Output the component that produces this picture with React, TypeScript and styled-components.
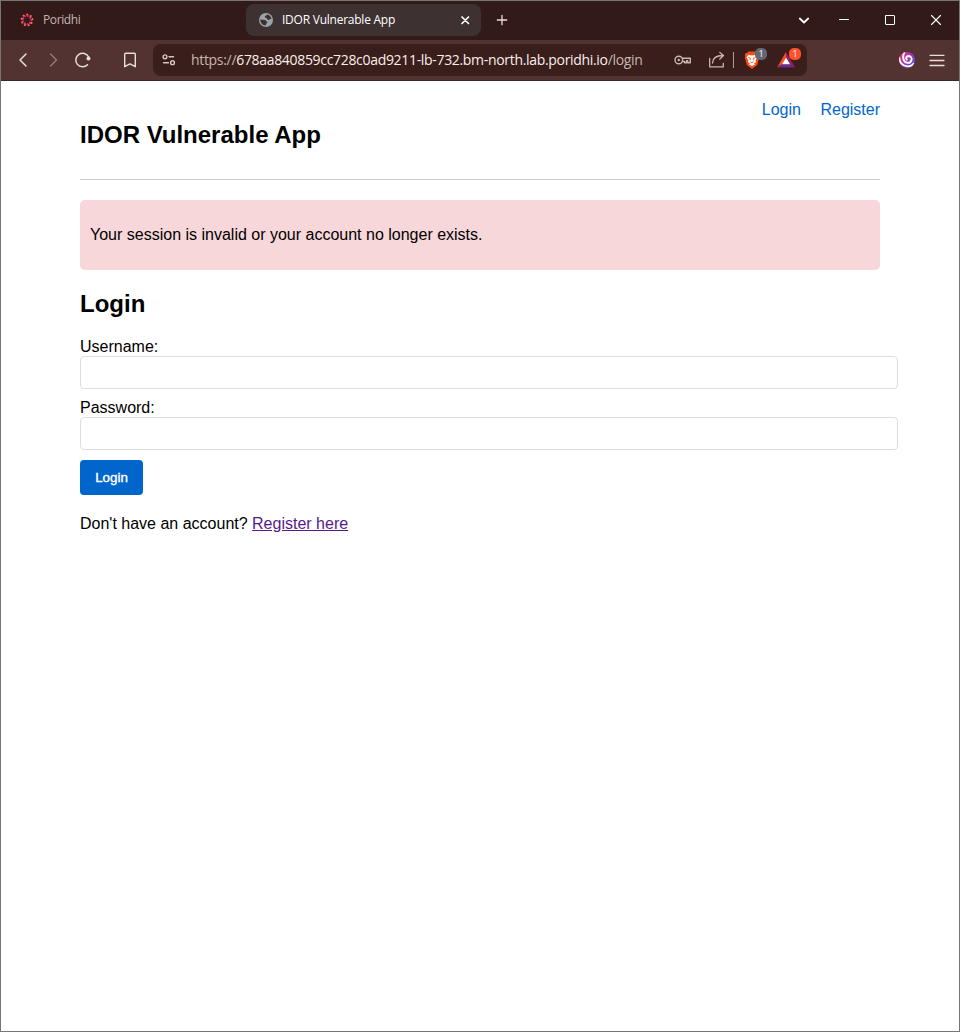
import React from "react";
import styled, { createGlobalStyle } from "styled-components";

const GlobalStyle = createGlobalStyle`
  * { box-sizing: border-box; }
  body { margin: 0; background: #fff; }
`;

const Window = styled.div`
  display: flex;
  flex-direction: column;
  width: 960px;
  height: 1032px;
  border: 1px solid #767676;
  background: #fff;
  overflow: hidden;
`;

const TabStrip = styled.div`
  display: flex;
  align-items: center;
  flex: none;
  height: 39px;
  padding: 0 0 1px 6px;
  gap: 4px;
  background: #311a17;
`;

const Tab = styled.div<{ $active?: boolean }>`
  display: flex;
  align-items: center;
  width: 235px;
  height: 32px;
  padding: 0 8px 0 12px;
  border-radius: 8px;
  background: ${(p) => (p.$active ? "#3e3131" : "transparent")};
  color: ${(p) => (p.$active ? "#fff" : "#c2b6b4")};
`;

const TabTitle = styled.span<{ $spacing: number }>`
  flex: 1;
  margin-left: 8px;
  font: 12px/16px "Open Sans", "Noto Sans", sans-serif;
  letter-spacing: ${(p) => p.$spacing}px;
  white-space: nowrap;
`;

const Cell = styled.span<{ $w: number; $color?: string }>`
  display: flex;
  flex: none;
  align-items: center;
  justify-content: center;
  width: ${(p) => p.$w}px;
  height: 32px;
  color: ${(p) => p.$color ?? "#e9dedb"};
`;

const BookmarkCell = styled(Cell)`
  margin-left: 17px;
`;

const WindowControls = styled.div`
  display: flex;
  margin-left: auto;
`;

const Toolbar = styled.div`
  display: flex;
  align-items: center;
  flex: none;
  height: 41px;
  padding: 0 7px;
  background: #523331;
  border-bottom: 1px solid #3b2728;
`;

const AddressBar = styled.div`
  display: flex;
  align-items: center;
  width: 654px;
  height: 32px;
  margin-left: 8px;
  padding-right: 4px;
  border-radius: 8px;
  background: #391e1b;
`;

const Url = styled.span`
  flex: 1;
  margin-left: 6px;
  font: 14px/20px "Open Sans", "Noto Sans", sans-serif;
  letter-spacing: -0.32px;
  white-space: nowrap;
  color: #c9b6b2;
`;

const Host = styled.span`
  color: #fbeeeb;
`;

const Divider = styled.span`
  width: 1px;
  height: 16px;
  background: #ae9d9a;
`;

const Extension = styled(Cell)`
  position: relative;
`;

const Badge = styled.span<{ $bg: string }>`
  position: absolute;
  top: 4px;
  right: 2px;
  width: 12px;
  height: 12px;
  border-radius: 5px;
  background: ${(p) => p.$bg};
  color: #fff;
  font: 9px/12px "Open Sans", sans-serif;
  text-align: center;
`;

const ToolbarEnd = styled.div`
  display: flex;
  margin-left: auto;
`;

const Page = styled.main`
  width: 800px;
  margin: 0 auto;
  font: 16px/18px "Liberation Sans", Arial, sans-serif;
  color: #000;
`;

const Header = styled.header`
  display: flex;
  justify-content: space-between;
  align-items: flex-start;
  height: 99px;
  padding-top: 20px;
  border-bottom: 1px solid #ccc;
`;

const Heading = styled.h2`
  margin: 20px 0;
  font-size: 24px;
  line-height: 28px;
`;

const Nav = styled.nav`
  display: flex;
  gap: 19.500px;
`;

const NavLink = styled.a`
  color: #0066cc;
  text-decoration: none;
`;

const Alert = styled.div`
  margin: 20px 0;
  padding: 26px 10px;
  border-radius: 5px;
  background: #f8d7da;
`;

const Field = styled.label`
  display: block;
  margin-bottom: 10px;
`;

const Input = styled.input`
  display: block;
  width: 818px;
  height: 33px;
  padding: 8px;
  border: 1px solid #ddd;
  border-radius: 4px;
  background: #fff;
`;

const Submit = styled.button`
  display: block;
  width: 63px;
  height: 35px;
  padding: 0;
  border: 0;
  border-radius: 4px;
  background: #0066cc;
  color: #fff;
  font: 13.333px "Liberation Sans", Arial, sans-serif;
  -webkit-text-stroke: 0.4px #fff;
`;

const Signup = styled.p`
  margin: 20px 0 0;
`;

const VisitedLink = styled.a`
  color: #551a8b;
  text-decoration: underline;
`;

type StrokeProps = { size?: number; w?: number; children: React.ReactNode };
const Stroke = ({ size = 20, w = 1.4, children }: StrokeProps) => (
  <svg
    width={size}
    height={size}
    viewBox={`0 0 ${size} ${size}`}
    fill="none"
    stroke="currentColor"
    strokeWidth={w}
    strokeLinecap="round"
    strokeLinejoin="round"
  >
    {children}
  </svg>
);

const dots = Array.from({ length: 9 }, (_, i) => i * 40);

const PoridhiIcon = () => (
  <svg width="16" height="16" viewBox="0 0 16 16">
    {dots.map((a, i) => (
      <g key={a} transform={`rotate(${a + 10} 8 8)`}>
        <path d="M7 2.200 8.800 4.600" stroke={i % 2 ? "#ee3d5c" : "#d3207c"} strokeWidth="2" />
        <circle cx="7.2" cy="2.5" r=".9" fill="#f27a4b" />
      </g>
    ))}
  </svg>
);

const GlobeIcon = () => (
  <svg width="16" height="16" viewBox="0 0 16 16">
    <circle cx="8" cy="8" r="7" fill="#9ba3ab" />
    <path
      d="M2.3 7.3c1.4.8 3 .4 4.6.8 1.3.3 1.2 1.5 2.5 1.9.2 1.2-1.5 1.3-1.6 3.5-3.2 0-5.6-2.7-5.5-6.2ZM9 2.4c-.2 1.2-2 .9-2.2 2.1-.2 1.4 1.3 1 2 1.8.6.7.2 1.5 1.4 1.6 1.3.1 1.3-1.1 3.3-.7C13.2 4.7 11.5 2.7 9 2.4Z"
      fill="#3e3131"
    />
  </svg>
);

const BraveIcon = () => (
  <svg width="18" height="20" viewBox="0 0 18 20">
    <path d="m5.500 1.500h7l1.200 1.300 1.600.3 1 2.200-.4 1.300.2 1.400-2 7L9 19l-5.100-4-2-7 .2-1.400-.4-1.300 1-2.200 1.600-.3Z" fill="#fb4b12" />
    <path d="m5.300 4.800 3.700.6 3.700-.6 1.800 2.700-2 3 .6 1.700-2.100 1.100 1 1.200L9 16l-3-1.500 1-1.200-2.100-1.100.6-1.700-2-3Z" fill="#fff" />
    <path d="m5.500 7.500 2.200.7-.8 1.900M12.500 7.500l-2.200.7.8 1.900M7.300 11.900l1.700.7 1.700-.7" fill="none" stroke="#fb4b12" strokeWidth=".9" />
  </svg>
);

const BatIcon = () => (
  <svg width="20" height="18" viewBox="0 0 20 18">
    <path d="M10 1 1 16.500l5-3.300 4-6.700Z" fill="#ff4724" />
    <path d="m10 1 9 15.500-5-3.300-4-6.700Z" fill="#9e1f63" />
    <path d="M1 16.500h18l-5-3.300H6Z" fill="#662d91" />
    <path d="m10 6.500 4 6.700H6Z" fill="#fff" />
  </svg>
);

const LeoIcon = () => (
  <svg width="18" height="18" viewBox="0 0 18 18">
    <defs>
      <linearGradient id="swirl" x1="0" y1="0.2" x2="1" y2="0.9">
        <stop offset="0" stopColor="#ef3470" />
        <stop offset=".5" stopColor="#a536b5" />
        <stop offset="1" stopColor="#3b5bea" />
      </linearGradient>
      <clipPath id="disc"><circle cx="9" cy="9" r="8" /></clipPath>
    </defs>
    <circle cx="9" cy="9" r="8" fill="url(#swirl)" />
    <g fill="none" stroke="#fff" strokeLinecap="round" clipPath="url(#disc)">
      <path d="M6.500.800C3.800 6.500 5.600 11.700 9.800 11.900c4.500.1 5.300-6.600.8-6.900-2.300 0-3.100 2.200-1.800 3.500" strokeWidth="1.900" />
      <path d="M1.200 6.500c0 4.800 3.400 8.700 8.300 8.900 2.500 0 4.700-1 6-2.600" strokeWidth="1.900" />
    </g>
  </svg>
);

export default function App() {
  return (
    <>
      <GlobalStyle />
      <Window>
        <TabStrip>
          <Tab>
            <PoridhiIcon />
            <TabTitle $spacing={-0.4}>Poridhi</TabTitle>
          </Tab>
          <Tab $active>
            <GlobeIcon />
            <TabTitle $spacing={-0.24}>IDOR Vulnerable App</TabTitle>
            <Cell $w={16} $color="#fff">
              <Stroke size={16} w={1.7}><path d="m5 5 6.500 6.500m0-6.500L5 11.500" /></Stroke>
            </Cell>
          </Tab>
          <Cell $w={34}>
            <Stroke w={1.3}><path d="M10 5.300v9.400M5.300 10h9.400" /></Stroke>
          </Cell>
          <WindowControls>
            <Cell $w={34} $color="#fff">
              <Stroke w={1.8}><path d="m5.800 8.500 4.200 4 4.200-4" /></Stroke>
            </Cell>
            <Cell $w={46} $color="#fff">
              <Stroke w={1}><path d="M5.500 9.500h9" /></Stroke>
            </Cell>
            <Cell $w={46} $color="#fff">
              <Stroke w={1}><rect x="5.500" y="5.500" width="9" height="9" rx=".5" /></Stroke>
            </Cell>
            <Cell $w={46} $color="#fff">
              <Stroke w={1.1}><path d="m5.500 5.500 9 9m0-9-9 9" /></Stroke>
            </Cell>
          </WindowControls>
        </TabStrip>

        <Toolbar>
          <Cell $w={30}>
            <Stroke w={1.5}><path d="m13 4-6 6 6 6" /></Stroke>
          </Cell>
          <Cell $w={30} $color="#947b78">
            <Stroke w={1.4}><path d="m7.500 4 6 6-6 6" /></Stroke>
          </Cell>
          <Cell $w={30}>
            <Stroke w={1.5}>
              <path d="M15.700 7A6.800 6.800 0 1 0 14.500 14.800" />
              <circle cx="15.500" cy="8.400" r="2" fill="currentColor" stroke="none" />
            </Stroke>
          </Cell>
          <BookmarkCell $w={30}>
            <Stroke size={22} w={1.4}><path d="M5.700 5.200a1 1 0 0 1 1-1h8.600a1 1 0 0 1 1 1v12.500L11 14.800l-5.300 2.900Z" /></Stroke>
          </BookmarkCell>
          <AddressBar>
            <Cell $w={32} $color="#d8c6c1">
              <Stroke w={1.4}>
                <circle cx="6" cy="6.800" r="1.900" />
                <path d="M10 6.800h4.500M4.500 12.700h5" />
                <circle cx="13.500" cy="12.700" r="1.900" />
              </Stroke>
            </Cell>
            <Url>
              https://<Host>678aa840859cc728c0ad9211-lb-732.bm-north.lab.poridhi.io</Host>/login
            </Url>
            <Cell $w={34} $color="#c9b6b2">
              <Stroke w={1.4}>
                <circle cx="5.800" cy="10" r="3.800" />
                <circle cx="5.800" cy="10" r="1.200" fill="currentColor" stroke="none" />
                <path d="M9.500 8.300h7.800v4.400h-2.600v-2h-1.200v2h-2v-1.200H9.500" />
              </Stroke>
            </Cell>
            <Cell $w={33} $color="#c9b6b2">
              <Stroke w={1.3}>
                <path d="M2.700 8.500v8.300h13.600v-3.500M5.500 13c.2-4.700 3.600-7.500 10.500-7.500M12.800 2.500l3.700 3-3.700 3.500" />
              </Stroke>
            </Cell>
            <Divider />
            <Extension $w={35}>
              <BraveIcon />
              <Badge $bg="#626773">1</Badge>
            </Extension>
            <Extension $w={34}>
              <BatIcon />
              <Badge $bg="#ff512c">1</Badge>
            </Extension>
          </AddressBar>
          <ToolbarEnd>
            <Cell $w={30}><LeoIcon /></Cell>
            <Cell $w={30}>
              <Stroke w={1.3}><path d="M3 5.300h14M3 10.500h14M3 15.500h14" /></Stroke>
            </Cell>
          </ToolbarEnd>
        </Toolbar>

        <Page>
          <Header>
            <Heading>IDOR Vulnerable App</Heading>
            <Nav>
              <NavLink>Login</NavLink>
              <NavLink>Register</NavLink>
            </Nav>
          </Header>
          <Alert>Your session is invalid or your account no longer exists.</Alert>
          <Heading>Login</Heading>
          <form>
            <Field>Username:<Input type="text" /></Field>
            <Field>Password:<Input type="password" /></Field>
            <Submit type="button">Login</Submit>
          </form>
          <Signup>
            Don't have an account? <VisitedLink>Register here</VisitedLink>
          </Signup>
        </Page>
      </Window>
    </>
  );
}
